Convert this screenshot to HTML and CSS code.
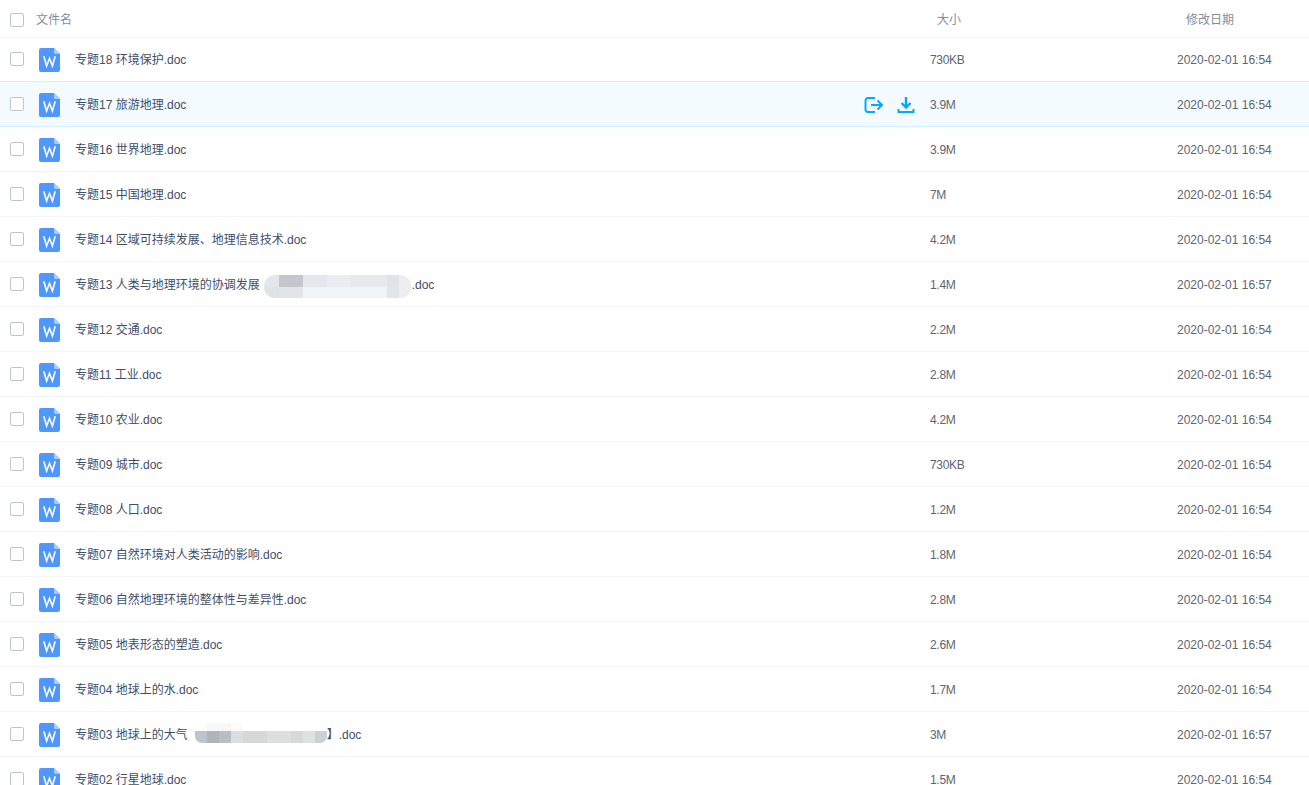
FILE: index.html
```html
<!DOCTYPE html>
<html lang="zh-CN">
<head>
<meta charset="utf-8">
<title>文件列表</title>
<link rel="stylesheet" href="styles.css">
</head>
<body>
<svg class="defs" width="0" height="0" aria-hidden="true">
  <symbol id="word" viewBox="0 0 21 24">
    <path d="M2 0H15L21 6V22a2 2 0 0 1-2 2H2a2 2 0 0 1-2-2V2a2 2 0 0 1 2-2Z" fill="#4d97ff"/>
    <path d="M15 0L21 6H16.500a1.500 1.500 0 0 1-1.500-1.500Z" fill="#a6cbff"/>
    <path d="M4.800 8.200L7.600 18L10.500 10.200L13.400 18L16.200 8.200" fill="none" stroke="#fff" stroke-width="1.600"/>
  </symbol>
</svg>
<div class="list">
  <div class="row head">
    <span class="check"></span>
    <span class="name-head">文件名</span>
    <span class="size-head">大小</span>
    <span class="date-head">修改日期</span>
  </div>
  <div class="row"><span class="check"></span><svg class="icon"><use href="#word"/></svg><span class="name">专题18 环境保护.doc</span><span class="size">730KB</span><span class="date">2020-02-01 16:54</span></div>
  <div class="row hover"><span class="check"></span><svg class="icon"><use href="#word"/></svg><span class="name">专题17 旅游地理.doc</span>
    <span class="actions">
      <svg class="act" viewBox="0 0 20 18"><path d="M11 2H4a2.500 2.500 0 0 0-2.500 2.500v9A2.500 2.500 0 0 0 4 16h7M7 9h11M13.500 4.500L18 9l-4.500 4.500" fill="none" stroke="#06a7ff" stroke-width="2"/></svg>
      <svg class="act" viewBox="0 0 20 18"><path d="M10 1v10M5.500 7L10 11.500L14.500 7" fill="none" stroke="#06a7ff" stroke-width="2.400"/><path d="M2.500 13v3h15v-3" fill="none" stroke="#06a7ff" stroke-width="2"/></svg>
    </span>
    <span class="size">3.9M</span><span class="date">2020-02-01 16:54</span></div>
  <div class="row"><span class="check"></span><svg class="icon"><use href="#word"/></svg><span class="name">专题16 世界地理.doc</span><span class="size">3.9M</span><span class="date">2020-02-01 16:54</span></div>
  <div class="row"><span class="check"></span><svg class="icon"><use href="#word"/></svg><span class="name">专题15 中国地理.doc</span><span class="size">7M</span><span class="date">2020-02-01 16:54</span></div>
  <div class="row"><span class="check"></span><svg class="icon"><use href="#word"/></svg><span class="name">专题14 区域可持续发展、地理信息技术.doc</span><span class="size">4.2M</span><span class="date">2020-02-01 16:54</span></div>
  <div class="row"><span class="check"></span><svg class="icon"><use href="#word"/></svg><span class="name">专题13 人类与地理环境的协调发展<span class="blur blur-a"></span>.doc</span><span class="size">1.4M</span><span class="date">2020-02-01 16:57</span></div>
  <div class="row"><span class="check"></span><svg class="icon"><use href="#word"/></svg><span class="name">专题12 交通.doc</span><span class="size">2.2M</span><span class="date">2020-02-01 16:54</span></div>
  <div class="row"><span class="check"></span><svg class="icon"><use href="#word"/></svg><span class="name">专题11 工业.doc</span><span class="size">2.8M</span><span class="date">2020-02-01 16:54</span></div>
  <div class="row"><span class="check"></span><svg class="icon"><use href="#word"/></svg><span class="name">专题10 农业.doc</span><span class="size">4.2M</span><span class="date">2020-02-01 16:54</span></div>
  <div class="row"><span class="check"></span><svg class="icon"><use href="#word"/></svg><span class="name">专题09 城市.doc</span><span class="size">730KB</span><span class="date">2020-02-01 16:54</span></div>
  <div class="row"><span class="check"></span><svg class="icon"><use href="#word"/></svg><span class="name">专题08 人口.doc</span><span class="size">1.2M</span><span class="date">2020-02-01 16:54</span></div>
  <div class="row"><span class="check"></span><svg class="icon"><use href="#word"/></svg><span class="name">专题07 自然环境对人类活动的影响.doc</span><span class="size">1.8M</span><span class="date">2020-02-01 16:54</span></div>
  <div class="row"><span class="check"></span><svg class="icon"><use href="#word"/></svg><span class="name">专题06 自然地理环境的整体性与差异性.doc</span><span class="size">2.8M</span><span class="date">2020-02-01 16:54</span></div>
  <div class="row"><span class="check"></span><svg class="icon"><use href="#word"/></svg><span class="name">专题05 地表形态的塑造.doc</span><span class="size">2.6M</span><span class="date">2020-02-01 16:54</span></div>
  <div class="row"><span class="check"></span><svg class="icon"><use href="#word"/></svg><span class="name">专题04 地球上的水.doc</span><span class="size">1.7M</span><span class="date">2020-02-01 16:54</span></div>
  <div class="row"><span class="check"></span><svg class="icon"><use href="#word"/></svg><span class="name">专题03 地球上的大气<span class="blur blur-b"></span>】.doc</span><span class="size">3M</span><span class="date">2020-02-01 16:57</span></div>
  <div class="row"><span class="check"></span><svg class="icon"><use href="#word"/></svg><span class="name">专题02 行星地球.doc</span><span class="size">1.5M</span><span class="date">2020-02-01 16:54</span></div>
</div>
</body>
</html>
```
FILE: styles.css
```css
html, body {
  margin: 0;
  height: 785px;
  overflow: hidden;
  background: #fff;
}
.defs { position: absolute; }
.list {
  font-family: "Liberation Sans", "Noto Sans CJK SC", sans-serif;
  font-size: 12px;
  line-height: 16px;
  color: #424e67;
}
.row {
  box-sizing: border-box;
  height: 45px;
  display: flex;
  align-items: center;
  padding-top: 2px;
  padding-left: 10px;
  border-bottom: 1px solid #f4f5f7;
}
.head {
  height: 38px;
  color: #878c9c;
}
.head + .row {
  height: 44px;
  padding-top: 1px;
}
.hover {
  background: #f4fbff;
  border-bottom-color: #cfeeff;
  box-shadow: 0 -1px 0 #dcecfb;
}
.check {
  box-sizing: border-box;
  flex: none;
  width: 14px;
  height: 14px;
  border: 1px solid #bfc5d0;
  border-radius: 2px;
  background: #fff;
  margin-top: -2px;
}
.head .check { margin-top: 0; }
.icon {
  flex: none;
  width: 21px;
  height: 24px;
  margin-left: 15px;
  margin-right: 15px;
}
.name { flex: 1; white-space: nowrap; min-width: 0; margin-top: -1px; }
.name-head { flex: none; width: 901px; margin-left: 12px; }
.size-head { flex: none; width: 249px; }
.date-head { flex: none; }
.size { flex: none; width: 247px; letter-spacing: -0.3px; color: #5f6470; }
.date { flex: none; width: 132px; color: #5f6470; }
.actions {
  flex: none;
  display: flex;
  gap: 12px;
  margin-right: 14px;
}
.act { width: 20px; height: 18px; }
.blur {
  display: inline-block;
  vertical-align: middle;
  border-radius: 11px;
  background-repeat: no-repeat;
}
.blur-a {
  width: 147px;
  height: 23px;
  margin: -6px 1px -8px 4px;
  background-image:
    linear-gradient(90deg, #e3e6ea 0 15px, #c2c7cc 15px 39px, #e5e7ec 39px 63px, #eaecef 63px 87px, #e7e9ec 87px 123px, #e0e4e8 123px 135px, #eceef0 135px),
    linear-gradient(90deg, #dfe3e8 0 15px, #e3e5e8 15px 27px, #e0e5ea 27px 39px, #f2f3f4 39px 123px, #e2e5e9 123px 135px, #eceef0 135px);
  background-size: 100% 12px, 100% 11px;
  background-position: 0 0, 0 12px;
}
.blur-b {
  width: 132px;
  height: 20px;
  margin: -8px 0 -4px 7px;
  border-radius: 7px;
  background-image:
    linear-gradient(90deg, #fff 0 12px, #f7f7f7 12px 36px, #fbfbfb 36px 48px, #fff 48px),
    linear-gradient(90deg, #bec4cc 0 12px, #b1b3b9 12px 24px, #b7bec7 24px 36px, #dbdde0 36px 48px, #d5d7db 48px 72px, #dcdee1 72px 96px, #d6d8dc 96px 108px, #dfe1e3 108px 120px, #ccd0d5 120px);
  background-size: 100% 8px, 100% 12px;
  background-position: 0 0, 0 8px;
}
```
